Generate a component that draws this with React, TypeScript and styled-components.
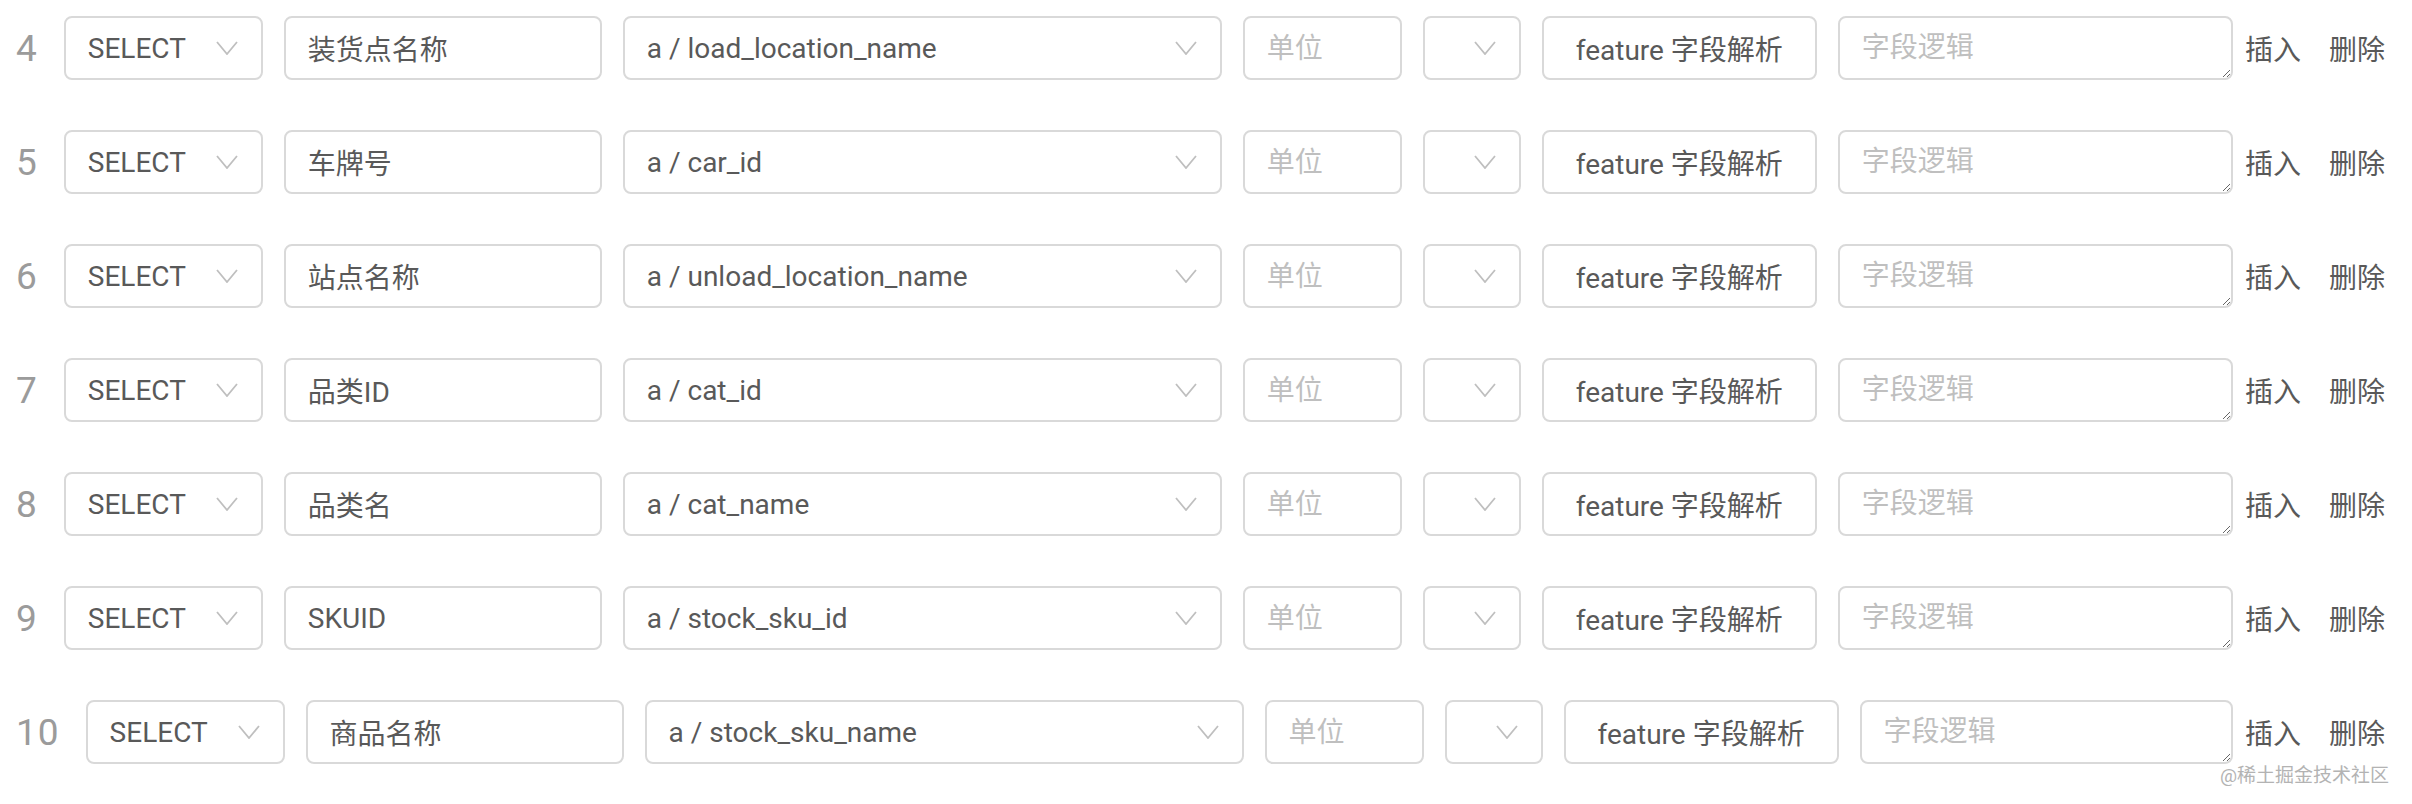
import styled, { createGlobalStyle } from "styled-components";

const GlobalStyle = createGlobalStyle`
  html, body {
    margin: 0;
    padding: 0;
    background: #fff;
  }
  body {
    font-family: Roboto, "Noto Sans CJK SC", sans-serif;
    color: #595959;
  }
`;

type FieldRow = {
  index: number;
  label: string;
  field: string;
};

const rows: FieldRow[] = [
  { index: 4, label: "装货点名称", field: "a / load_location_name" },
  { index: 5, label: "车牌号", field: "a / car_id" },
  { index: 6, label: "站点名称", field: "a / unload_location_name" },
  { index: 7, label: "品类ID", field: "a / cat_id" },
  { index: 8, label: "品类名", field: "a / cat_name" },
  { index: 9, label: "SKUID", field: "a / stock_sku_id" },
  { index: 10, label: "商品名称", field: "a / stock_sku_name" },
];

const Page = styled.div`
  position: relative;
  height: 804px;
  padding-top: 16px;
  box-sizing: border-box;
`;

const Row = styled.div`
  display: flex;
  align-items: center;
  height: 64px;
  margin-bottom: 50px;
  padding: 0 27px 0 16px;
  font-size: 28px;
`;

const RowIndex = styled.span`
  font-size: 37px;
  line-height: 1;
  color: #9b9b9b;
  letter-spacing: 1px;
  margin-right: 26px;
`;

const Fields = styled.div`
  display: flex;
  align-items: center;
  gap: 21px;
  flex: 1;
  min-width: 0;
`;

const boxBase = `
  box-sizing: border-box;
  height: 64px;
  border: 2px solid #d9d9d9;
  border-radius: 8px;
  background: #fff;
  font-family: Roboto, "Noto Sans CJK SC", sans-serif;
  font-size: 28px;
  color: #595959;
`;

const SelectBox = styled.div<{ $width: number }>`
  ${boxBase}
  width: ${(p) => p.$width}px;
  flex: none;
  display: flex;
  align-items: center;
  padding: 0 23px 0 22px;
`;

const SelectValue = styled.span`
  flex: 1;
  white-space: nowrap;
  overflow: hidden;
`;

const Arrow = styled.svg`
  width: 22px;
  height: 14px;
  flex: none;
`;

const TextInput = styled.input<{ $width: number }>`
  ${boxBase}
  width: ${(p) => p.$width}px;
  flex: none;
  padding: 0 22px;
  outline: none;
  &::placeholder {
    color: #bfbfbf;
  }
`;

const FeatureButton = styled.button`
  ${boxBase}
  width: 275px;
  flex: none;
  padding: 0 28px;
  cursor: pointer;
  white-space: nowrap;
`;

const LogicArea = styled.textarea`
  ${boxBase}
  flex: 1;
  min-width: 0;
  padding: 8px 22px;
  line-height: 44px;
  outline: none;
  resize: vertical;
  &::placeholder {
    color: #bfbfbf;
  }
`;

const Actions = styled.div`
  display: flex;
  align-items: center;
  gap: 28px;
  margin-left: 12px;
  flex: none;
`;

const ActionLink = styled.a`
  color: #595959;
  font-size: 28px;
  cursor: pointer;
  white-space: nowrap;
`;

const Watermark = styled.div`
  position: absolute;
  right: 23px;
  top: 760px;
  font-size: 19px;
  color: #b3b3b3;
  text-shadow: 0 0 2px #fff;
  white-space: nowrap;
`;

const ChevronDown = () => (
  <Arrow viewBox="0 0 22 14">
    <polyline
      points="1,1 11,13 21,1"
      fill="none"
      stroke="#bfbfbf"
      strokeWidth="1.8"
    />
  </Arrow>
);

const Select = ({ width, value }: { width: number; value?: string }) => (
  <SelectBox $width={width}>
    <SelectValue>{value}</SelectValue>
    <ChevronDown />
  </SelectBox>
);

export default function App() {
  return (
    <Page>
      <GlobalStyle />
      {rows.map((row) => (
        <Row key={row.index}>
          <RowIndex>{row.index}</RowIndex>
          <Fields>
            <Select width={199} value="SELECT" />
            <TextInput $width={318} defaultValue={row.label} />
            <Select width={599} value={row.field} />
            <TextInput $width={159} placeholder="单位" />
            <Select width={98} />
            <FeatureButton>feature 字段解析</FeatureButton>
            <LogicArea placeholder="字段逻辑" />
          </Fields>
          <Actions>
            <ActionLink>插入</ActionLink>
            <ActionLink>删除</ActionLink>
          </Actions>
        </Row>
      ))}
      <Watermark>@稀土掘金技术社区</Watermark>
    </Page>
  );
}
